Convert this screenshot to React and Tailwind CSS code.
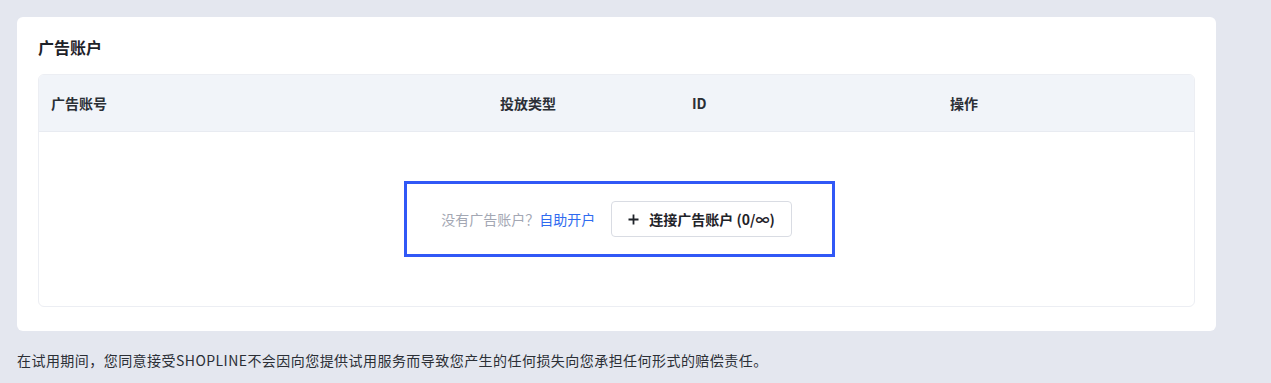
import React from 'react';

const font = { fontFamily: '"Noto Sans CJK SC", "Noto Sans", sans-serif' };

const columns = [
  { label: '广告账号', width: 'w-[449px]' },
  { label: '投放类型', width: 'w-[192px]' },
  { label: 'ID', width: 'w-[258px]' },
  { label: '操作', width: 'flex-1' },
];

const App = () => {
  return (
    <div className="min-h-[383px] bg-[#e4e7ef] pt-[17px] pl-[17px]" style={font}>
      {/* Ad accounts card */}
      <div className="w-[1199px] rounded-md bg-white px-[21px] pt-[19px] pb-[24px]">
        <h2 className="text-[16px] leading-[22px] font-bold text-[#1f2329]">广告账户</h2>

        <div className="mt-[16px] overflow-hidden rounded-md border border-[#eceef3]">
          <div className="flex h-[57px] items-center border-b border-[#e8ebf1] bg-[#f1f4f9]">
            {columns.map((col) => (
              <div key={col.label} className={`${col.width} px-[12px] text-[14px] font-bold text-[#2b2f36]`}>
                {col.label}
              </div>
            ))}
          </div>

          <div className="flex h-[174px] items-center justify-center">
            <div className="ml-[6px] flex h-[76px] w-[431px] items-center justify-center gap-[16px] border-[3px] border-[#3158f6] pr-[6px]">
              <p className="text-[14px] text-[#a3a7b3]">
                没有广告账户？<a href="#" className="text-[#2f6bf0]">自助开户</a>
              </p>
              <button className="flex h-[36px] items-center gap-[10px] rounded border border-[#d9dce3] bg-white px-[16px] text-[14px] font-bold text-[#1f2329]">
                <svg width="11" height="11" viewBox="0 0 11 11" fill="none">
                  <path d="M5.5 0.5v10M0.5 5.5h10" stroke="#1f2329" strokeWidth="1.8" />
                </svg>
                连接广告账户 (0/∞)
              </button>
            </div>
          </div>
        </div>
      </div>

      <p className="mt-[20px] text-[14px] leading-[18px] tracking-[0.45px] text-[#2b2f36]">
        在试用期间，您同意接受SHOPLINE不会因向您提供试用服务而导致您产生的任何损失向您承担任何形式的赔偿责任。
      </p>
    </div>
  );
};

export default App;
